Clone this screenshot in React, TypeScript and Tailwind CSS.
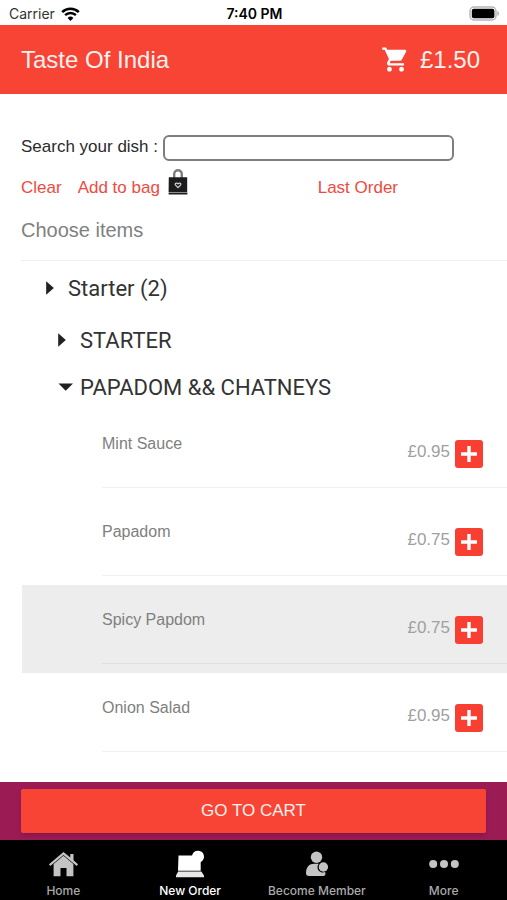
import * as React from "react";

import { MdShoppingCart } from "react-icons/md";

const dishes = [
  { name: "Mint Sauce", price: "£0.95" },
  { name: "Papadom", price: "£0.75" },
  { name: "Spicy Papdom", price: "£0.75" },
  { name: "Onion Salad", price: "£0.95" },
];

const WifiIcon = () => (
  <svg className="w-[19px] h-[14px]" viewBox="0 0 19 14" fill="none" stroke="#000">
    <path d="M1.2 5.1a12 12 0 0 1 16.6 0" strokeWidth="2.6" />
    <path d="M4.1 8.2a7.8 7.8 0 0 1 10.8 0" strokeWidth="2.5" />
    <path d="M9.5 14 6.6 10.9a4.2 4.2 0 0 1 5.8 0Z" fill="#000" stroke="none" />
  </svg>
);

const BatteryIcon = () => (
  <svg className="w-[31px] h-[15px]" viewBox="0 0 31 15">
    <rect x="1" y="1" width="26" height="13" rx="4" fill="#fff" stroke="#b5b5b5" strokeWidth="1.4" />
    <rect x="2.8" y="2.8" width="22.6" height="9.4" rx="2" />
    <path d="M28.3 5v5c1.1-.4 1.8-1.4 1.8-2.5S29.4 5.4 28.3 5Z" fill="#b5b5b5" />
  </svg>
);

const BagIcon = () => (
  <svg className="w-5 h-[26px]" viewBox="0 0 20 26">
    <path d="M6.200 9V5a3.800 3.800 0 0 1 7.600 0v4" fill="none" stroke="#7d7d7d" strokeWidth="2.4" />
    <path d="M.8 8.200h18.400v14.800H.6Z" fill="#1c1c1e" />
    <path d="M.6 23.500h18.800v2H.6Z" fill="#1c1c1e" />
    <path
      d="m10 18.600-2.500-2.400c-1.200-1.500 1-3 2.500-1.300 1.500-1.700 3.700-.2 2.500 1.300Z"
      fill="none"
      stroke="#d5d5d5"
      strokeWidth="1.2"
    />
  </svg>
);

const Arrow = ({ open }: { open?: boolean }) => (
  <svg
    className={open ? "w-4 h-2 mr-1.5" : "w-2 h-3.5 mr-3.5"}
    viewBox={open ? "0 0 16 8" : "0 0 8 14"}
    fill="#212121"
  >
    <path d={open ? "M.5.5h14.500L7.700 7.700Z" : "M.2.200v13.600L7.800 7Z"} />
  </svg>
);

const HomeIcon = () => (
  <svg className="w-[30px] h-[26px]" viewBox="0 0 30 26" fill="#c4c4c4">
    <path d="M15.500.9 1 13.200l1.300 1.700L15.500 4l13.200 10.900 1.300-1.700-4.500-3.900V3.100H22.300v3.400Z" />
    <path d="M15.500 4.800 5.600 13v12.300h6.900v-8.200h6v8.200h6.900V13Z" />
  </svg>
);

const OrderIcon = () => (
  <svg className="w-[30px] h-[28px]" viewBox="0 0 30 28" fill="#fff">
    <path d="M3.5 5.5h13.600a6 6 0 1 1 8.600 6.5v8.700H3Z" />
    <path d="M3.200 21.400h23.200l2.600 4.100v1.800H1v-1.800Z" fill="#e8e8e8" />
  </svg>
);

const MemberIcon = () => (
  <svg className="w-6 h-[26px]" viewBox="0 0 24 26" fill="#c4c4c4">
    <circle cx="11.500" cy="6.300" r="5.700" />
    <path d="M1 22.300c0-6.500 3.500-9.500 8-9.500h5c-1 1-1.500 2-1.500 3.200 0 3.200 2.400 5.500 5.400 5.500.8 0 1.600-.2 2.300-.5.7 2.700-.1 4.100-2 4.100H4c-1.900 0-3-1-3-2.800Z" />
    <circle cx="18.400" cy="16" r="4.700" />
  </svg>
);

const MoreIcon = () => (
  <svg className="w-[30px] h-[26px]" viewBox="0 0 30 26" fill="#c4c4c4">
    <circle cx="4.200" cy="13" r="4" />
    <circle cx="15" cy="13" r="4" />
    <circle cx="25.800" cy="13" r="4" />
  </svg>
);

const tabs = [
  { label: "Home", icon: <HomeIcon /> },
  { label: "New Order", icon: <OrderIcon />, active: true },
  { label: "Become Member", icon: <MemberIcon /> },
  { label: "More", icon: <MoreIcon /> },
];

const App = () => {
  const [search, setSearch] = React.useState("");
  const [selected, setSelected] = React.useState("Spicy Papdom");

  return (
    <div className="flex flex-col min-h-screen bg-white font-['Liberation_Sans',Arial,sans-serif]">
      <div className="grid grid-cols-3 items-center h-[25px] pl-[9px] pr-[7px] pt-0.5 font-[Inter,sans-serif] text-sm text-black">
        <div className="flex items-center gap-1.5">
          <span className="text-[#333]">Carrier</span>
          <WifiIcon />
        </div>
        <p className="text-center font-semibold">7:40 PM</p>
        <div className="flex justify-end">
          <BatteryIcon />
        </div>
      </div>

      <header className="flex items-center justify-between h-[69px] pl-[21px] pr-[27px] bg-[#f74435] text-2xl text-[#fff1ef]">
        <h1>Taste Of India</h1>
        <button className="flex items-center gap-2.5">
          <MdShoppingCart className="w-[29px] h-[29px] text-white" />
          £1.50
        </button>
      </header>

      <main className="flex-1 pl-[21px] pt-[41px]">
        <div className="flex items-center gap-[5px] pr-[53px] text-[17px]">
          <label htmlFor="search" className="leading-5 mb-0.5 text-[#2b2b2b]">
            Search your dish :
          </label>
          <input
            id="search"
            className="flex-1 min-w-0 h-[26px] px-2 border-2 border-[#7c7f7f] rounded-md bg-white"
            value={search}
            onChange={(e) => setSearch(e.target.value)}
          />
        </div>

        <div className="flex items-center justify-between mt-2 h-[38px] pr-[109px] text-[17px] text-[#f04a40]">
          <div className="flex items-center">
            <button className="mr-4" onClick={() => setSearch("")}>
              Clear
            </button>
            <button className="flex items-center gap-2">
              Add to bag
              <span className="mb-3">
                <BagIcon />
              </span>
            </button>
          </div>
          <button>Last Order</button>
        </div>

        <h2 className="flex items-center h-[46px] mb-[7px] text-xl text-[#808080]">
          Choose items
        </h2>

        <div className="border-t border-[#efefef] font-[Roboto,sans-serif] text-[22px] text-[#333]">
          <button className="flex items-center w-full h-[54px] pl-[25px]">
            <Arrow />
            Starter (2)
          </button>
          <button className="flex items-center w-full h-[50px] pl-[37px]">
            <Arrow />
            STARTER
          </button>
          <button className="flex items-center w-full h-11 pl-[37px]">
            <Arrow open />
            PAPADOM && CHATNEYS
          </button>
        </div>

        <ul>
          {dishes.map((dish) => (
            <li
              key={dish.name}
              className={`ml-px pl-20 pb-[9px] ${
                selected === dish.name ? "bg-[#ededed]" : ""
              }`}
              onClick={() => setSelected(dish.name)}
            >
              <div
                className={`flex items-center h-[79px] pr-6 border-b ${
                  selected === dish.name ? "border-[#e0e0e0]" : "border-[#f1f1f1]"
                }`}
              >
                <p className="flex-1 pb-2 text-base text-[#808080]">{dish.name}</p>
                <p className="pt-2 mr-[5px] text-[17px] text-[#a0a0a0]">{dish.price}</p>
                <button
                  aria-label={`Add ${dish.name}`}
                  className="flex items-center justify-center w-7 h-7 mt-3 rounded-[3px] bg-[#f93e32]"
                >
                  <svg className="w-4 h-4" viewBox="0 0 16 16" stroke="#fff" strokeWidth="3.4">
                    <path d="M8 0v16M0 8h16" />
                  </svg>
                </button>
              </div>
            </li>
          ))}
        </ul>
      </main>

      <div className="px-[21px] py-[7px] bg-[#9b1b55]">
        <button className="w-full h-11 rounded-xs bg-[#f74435] shadow-md text-[17px] text-[#fff1ef]">
          GO TO CART
        </button>
      </div>

      <nav className="grid grid-cols-4 h-[60px] bg-black font-[Inter,sans-serif] text-xs font-medium">
        {tabs.map((tab) => (
          <button
            key={tab.label}
            className={`flex flex-col items-center justify-end pb-px ${
              tab.active ? "text-white" : "text-[#a9a9a9]"
            }`}
          >
            <span className="flex items-center h-7 mb-[5px]">{tab.icon}</span>
            <span className="whitespace-nowrap">{tab.label}</span>
          </button>
        ))}
      </nav>
    </div>
  );
};

export default App;
